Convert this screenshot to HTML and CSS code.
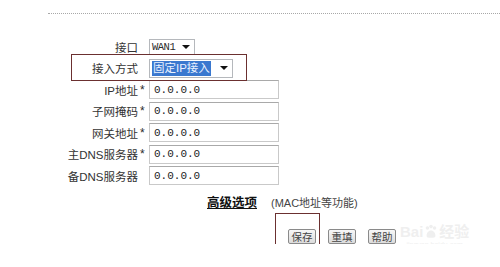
FILE: index.html
```html
<!DOCTYPE html>
<html lang="zh-CN">
<head>
    <meta charset="UTF-8">
    <meta name="viewport" content="width=device-width, initial-scale=1.0">
    <title>WAN口设置</title>
    <link rel="stylesheet" href="styles.css">
</head>
<body>
    <div class="rule"></div>

    <div class="form">
        <div class="row row-first">
            <label>接口</label>
            <span class="req"></span>
            <div class="select select-port">WAN1<i class="arrow"></i></div>
        </div>
        <div class="row row-mode">
            <label>接入方式</label>
            <span class="req"></span>
            <div class="select select-mode"><span class="picked">固定IP接入</span><i class="arrow"></i></div>
        </div>
        <div class="row">
            <label>IP地址</label>
            <span class="req">*</span>
            <input type="text" value="0.0.0.0">
        </div>
        <div class="row">
            <label>子网掩码</label>
            <span class="req">*</span>
            <input type="text" value="0.0.0.0">
        </div>
        <div class="row">
            <label>网关地址</label>
            <span class="req">*</span>
            <input type="text" value="0.0.0.0">
        </div>
        <div class="row">
            <label>主DNS服务器</label>
            <span class="req">*</span>
            <input type="text" value="0.0.0.0">
        </div>
        <div class="row">
            <label>备DNS服务器</label>
            <span class="req"></span>
            <input type="text" value="0.0.0.0">
        </div>

        <!-- annotation box drawn over the screenshot -->
        <span class="mark mark-mode"></span>
    </div>

    <div class="advanced">
        <a href="#">高级选项</a>
        <span class="hint">(MAC地址等功能)</span>
    </div>

    <div class="buttons">
        <button type="button">保存</button>
        <button type="button">重填</button>
        <button type="button">帮助</button>
        <span class="mark mark-save"></span>
        <div class="watermark">
            <span class="wm-logo">Bai<svg width="16" height="15" viewBox="0 0 18 16"><circle cx="5" cy="4" r="2"/><circle cx="9" cy="2.5" r="2"/><circle cx="13" cy="4" r="2"/><path d="M4 13c0-4 3-6 5-6s5 2 5 6c0 2-2 2-5 2s-5 0-5-2z"/></svg>经验</span>
            <span class="wm-url">jingyan.baidu.com</span>
        </div>
    </div>
</body>
</html>
```

FILE: styles.css
```css
body {
    margin: 0;
    background-color: #ffffff;
    color: #2b2b2b;
    font-family: "Liberation Sans", "Noto Sans CJK SC", sans-serif;
    font-size: 11.5px;
}

.rule {
    margin: 13px 0 0 48px;
    border-top: 1px dotted #a8a8a8;
}

.form {
    position: relative;
    margin-top: 22px;
}

.row {
    display: grid;
    grid-template-columns: 138px 11px 130px;
    align-items: center;
    height: 21.5px;
}

.row-first {
    height: 21px;
}

.row-mode {
    height: 22px;
}

.row label {
    text-align: right;
    color: #333;
}

.req {
    padding-left: 2px;
    font-size: 12px;
}

.row input {
    box-sizing: border-box;
    width: 130px;
    height: 19px;
    margin: 0;
    padding: 0 4px;
    border: 1px solid #c9c9c9;
    border-top-color: #a9a9a9;
    font-family: "Liberation Mono", monospace;
    font-size: 11px;
    color: #222;
}

.select {
    box-sizing: border-box;
    display: flex;
    align-items: center;
    justify-content: space-between;
    padding: 0 4px 0 2px;
    border: 1px solid #b5b8bc;
    background-color: #fff;
}

.select-port {
    width: 46px;
    height: 16px;
    font-family: "Liberation Mono", monospace;
    font-size: 10.5px;
    letter-spacing: -0.5px;
}

.select-mode {
    width: 84px;
    height: 19px;
}

.picked {
    padding: 1px 1px;
    background-color: #3a78cf;
    color: #eaf2ff;
    line-height: 13px;
}

.arrow {
    width: 0;
    height: 0;
    border-left: 4px solid transparent;
    border-right: 4px solid transparent;
    border-top: 4px solid #111;
}

.mark {
    position: absolute;
    border: 1px solid #6b3030;
}

.mark-mode {
    left: 71px;
    top: 18px;
    width: 174px;
    height: 25px;
}

.advanced {
    display: flex;
    align-items: center;
    gap: 14px;
    height: 20px;
    margin-top: 5px;
    padding-left: 207px;
}

.advanced a {
    color: #111;
    font-weight: bold;
    font-size: 12.5px;
}

.hint {
    color: #444;
    font-size: 11px;
}

.buttons {
    position: relative;
    display: flex;
    gap: 12px;
    margin-top: 17px;
    padding-left: 288px;
}

.buttons button {
    box-sizing: border-box;
    width: 28px;
    height: 15px;
    padding: 0;
    border: 1px solid #8a8a8a;
    border-radius: 2px;
    background: linear-gradient(#f7f7f7, #dcdcdc);
    color: #444;
    font-family: "Noto Sans CJK SC", sans-serif;
    font-size: 10.5px;
    line-height: 13px;
}

.mark-save {
    left: 275px;
    top: -16px;
    width: 43px;
    height: 38px;
}

.watermark {
    position: absolute;
    left: 400px;
    top: -6px;
    display: flex;
    flex-direction: column;
    align-items: center;
    color: #efefef;
}

.wm-logo {
    display: flex;
    align-items: center;
    font-family: "Liberation Sans", "Noto Sans CJK SC", sans-serif;
    font-weight: bold;
    font-size: 15px;
    line-height: 17px;
}

.wm-logo svg {
    fill: #efefef;
}

.wm-url {
    font-size: 7px;
    line-height: 9px;
}
```
